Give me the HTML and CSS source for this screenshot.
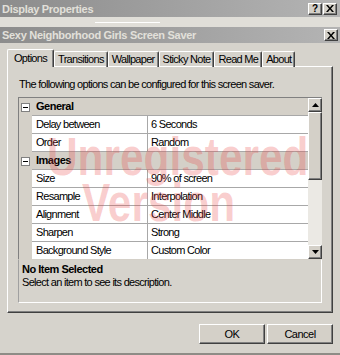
FILE: index.html
```html
<!DOCTYPE html>
<html lang="en">
<head>
    <meta charset="UTF-8">
    <title>Display Properties</title>
    <link rel="stylesheet" href="styles.css">
</head>
<body>
    <div class="window">
        <div class="caption caption-outer">
            <span class="caption-title">Display Properties</span>
            <div class="caption-buttons">
                <span class="cap-btn help">?</span>
                <span class="cap-btn"><svg width="8" height="7" viewBox="0 0 8 7"><path d="M0 0h2l2 2.5L6 0h2L5 3.5 8 7H6L4 4.5 2 7H0l3-3.5z" fill="#000"/></svg></span>
            </div>
        </div>
        <div class="behind"><span class="behind-edge"></span></div>
        <div class="caption caption-inner">
            <span class="caption-title">Sexy Neighborhood Girls Screen Saver</span>
            <span class="cap-btn"><svg width="8" height="7" viewBox="0 0 8 7"><path d="M0 0h2l2 2.5L6 0h2L5 3.5 8 7H6L4 4.5 2 7H0l3-3.5z" fill="#000"/></svg></span>
        </div>

        <div class="dialog-body">
            <ul class="tabs">
                <li class="tab active">Options</li>
                <li class="tab">Transitions</li>
                <li class="tab">Wallpaper</li>
                <li class="tab">Sticky Note</li>
                <li class="tab">Read Me</li>
                <li class="tab">About</li>
            </ul>
            <div class="tab-panel">
                <p class="intro">The following options can be configured for this screen saver.</p>
                <div class="propgrid">
                    <div class="grid-rows">
                        <div class="row category"><span class="gutter"><span class="toggle"></span></span><span class="cat-name">General</span></div>
                        <div class="row"><span class="gutter"></span><span class="name">Delay between</span><span class="value">6 Seconds</span></div>
                        <div class="row"><span class="gutter"></span><span class="name">Order</span><span class="value">Random</span></div>
                        <div class="row category"><span class="gutter"><span class="toggle"></span></span><span class="cat-name">Images</span></div>
                        <div class="row"><span class="gutter"></span><span class="name">Size</span><span class="value">90% of screen</span></div>
                        <div class="row"><span class="gutter"></span><span class="name">Resample</span><span class="value">Interpolation</span></div>
                        <div class="row"><span class="gutter"></span><span class="name">Alignment</span><span class="value">Center Middle</span></div>
                        <div class="row"><span class="gutter"></span><span class="name">Sharpen</span><span class="value">Strong</span></div>
                        <div class="row"><span class="gutter"></span><span class="name">Background Style</span><span class="value">Custom Color</span></div>
                    </div>
                    <div class="scrollbar">
                        <span class="sb-btn"><svg width="7" height="4" viewBox="0 0 7 4"><path d="M3.5 0L7 4H0z" fill="#000"/></svg></span>
                        <span class="sb-thumb"></span>
                        <span class="sb-track"></span>
                        <span class="sb-btn"><svg width="7" height="4" viewBox="0 0 7 4"><path d="M0 0h7L3.5 4z" fill="#000"/></svg></span>
                    </div>
                    <div class="watermark">Unregistered<br>Version</div>
                </div>
                <div class="description">
                    <div class="desc-title">No Item Selected</div>
                    <div class="desc-text">Select an item to see its description.</div>
                </div>
            </div>
            <div class="actions">
                <button class="btn">OK</button>
                <button class="btn">Cancel</button>
            </div>
        </div>
    </div>
</body>
</html>
```

FILE: styles.css
```css
body {
    margin: 0;
    font-family: "Liberation Sans", Arial, sans-serif;
    font-size: 11px;
    letter-spacing: -0.7px;
    color: #000000;
    background-color: #d6d3cc;
}
.window {
    width: 340px;
    height: 355px;
    box-sizing: border-box;
    border-bottom: 2px solid #8e8c86;
    background-color: #d6d3cc;
    overflow: hidden;
}

/* title bars */
.caption {
    display: flex;
    align-items: center;
    justify-content: space-between;
    padding: 0 3px 0 2px;
    background: linear-gradient(to right, #8c8c8c, #b4b4b4);
    color: #e2e0da;
    font-weight: bold;
    letter-spacing: -0.3px;
    white-space: nowrap;
}
.caption-outer {
    height: 17px;
}
.caption-inner {
    height: 16px;
    padding-right: 2px;
}
.caption-buttons {
    display: flex;
    gap: 1px;
}
.cap-btn {
    display: flex;
    align-items: center;
    justify-content: center;
    width: 12px;
    height: 10px;
    background-color: #d4d0c8;
    border: 1px solid;
    border-color: #ffffff #404040 #404040 #ffffff;
    box-shadow: inset -1px -1px 0 #808080;
    color: #000000;
    font-size: 10px;
    letter-spacing: 0;
}
.behind {
    height: 10px;
    background-color: #e0ded8;
    display: flex;
    align-items: center;
}
.behind-edge {
    width: 65px;
    height: 1px;
    margin-left: 95px;
    background-color: #ffffff;
}

/* tabs */
.dialog-body {
    padding: 0 7px;
}
.tabs {
    display: flex;
    align-items: flex-end;
    list-style: none;
    margin: 7px 0 0;
    padding: 0;
    height: 17px;
    position: relative;
    z-index: 1;
}
.tab {
    height: 15px;
    line-height: 15px;
    padding: 0 3px;
    white-space: nowrap;
    border: 1px solid;
    border-color: #ffffff #404040 transparent #ffffff;
    border-bottom: none;
    border-radius: 2px 2px 0 0;
    box-shadow: inset -1px 0 0 #808080;
}
.tab.active {
    height: 17px;
    line-height: 17px;
    padding: 0 6px;
    background-color: #d6d3cc;
}
.tab-panel {
    height: 247px;
    box-sizing: border-box;
    margin-top: -1px;
    padding: 0 10px;
    border: 1px solid;
    border-color: #ffffff #404040 #404040 #ffffff;
    box-shadow: inset -1px -1px 0 #808080;
}
.intro {
    margin: 11px 0 0 1px;
    height: 19px;
    line-height: 13px;
    white-space: nowrap;
}

/* property grid */
.propgrid {
    position: relative;
    display: flex;
    height: 162px;
    box-sizing: border-box;
    border-top: 1px solid #808080;
    border-left: 1px solid #808080;
    overflow: hidden;
}
.grid-rows {
    flex: 1;
    background-color: #ffffff;
}
.row {
    display: flex;
    height: 18px;
    line-height: 17px;
}
.gutter {
    width: 13px;
    flex: none;
    background-color: #d4d0c8;
    display: flex;
    justify-content: center;
    align-items: center;
}
.toggle {
    width: 7px;
    height: 7px;
    border: 1px solid #808080;
    background: linear-gradient(#000000, #000000) center / 5px 1px no-repeat, #ffffff;
}
.name {
    width: 111px;
    padding-left: 4px;
    border-right: 1px solid #a8a8a8;
    border-bottom: 1px solid #a8a8a8;
    white-space: nowrap;
}
.value {
    flex: 1;
    padding-left: 3px;
    border-bottom: 1px solid #a8a8a8;
    white-space: nowrap;
}
.category {
    background-color: #d4d0c8;
}
.cat-name {
    flex: 1;
    padding-left: 4px;
    font-weight: bold;
    letter-spacing: -0.5px;
    border-bottom: 1px solid #a8a8a8;
}
.scrollbar {
    width: 14px;
    display: flex;
    flex-direction: column;
    background-color: #ebe9e4;
}
.sb-btn, .sb-thumb {
    display: flex;
    align-items: center;
    justify-content: center;
    background-color: #d4d0c8;
    border: 1px solid;
    border-color: #ffffff #404040 #404040 #ffffff;
    box-shadow: inset -1px -1px 0 #808080;
}
.sb-btn {
    height: 12px;
}
.sb-thumb {
    height: 66px;
}
.sb-track {
    flex: 1;
}
.watermark {
    position: absolute;
    top: 36px;
    left: 0;
    right: 24px;
    text-align: center;
    font-weight: bold;
    font-size: 53px;
    line-height: 46px;
    letter-spacing: 0;
    color: rgba(232, 60, 60, 0.26);
    transform: scaleX(0.8);
    pointer-events: none;
}

/* description */
.description {
    height: 44px;
    box-sizing: border-box;
    padding: 3px 3px;
    border: 1px solid;
    border-color: #d4d0c8 #ffffff #ffffff #a0a0a0;
}
.desc-title {
    font-weight: bold;
    letter-spacing: -0.5px;
    line-height: 13px;
}
.desc-text {
    line-height: 12px;
}

/* buttons */
.actions {
    display: flex;
    justify-content: flex-end;
    gap: 2px;
    margin-top: 11px;
}
.btn {
    width: 66px;
    height: 20px;
    padding: 0;
    font-family: inherit;
    font-size: 11px;
    letter-spacing: -0.5px;
    background-color: #d4d0c8;
    border: 1px solid;
    border-color: #ffffff #404040 #404040 #ffffff;
    box-shadow: inset -1px -1px 0 #808080;
    color: #000000;
}
```
